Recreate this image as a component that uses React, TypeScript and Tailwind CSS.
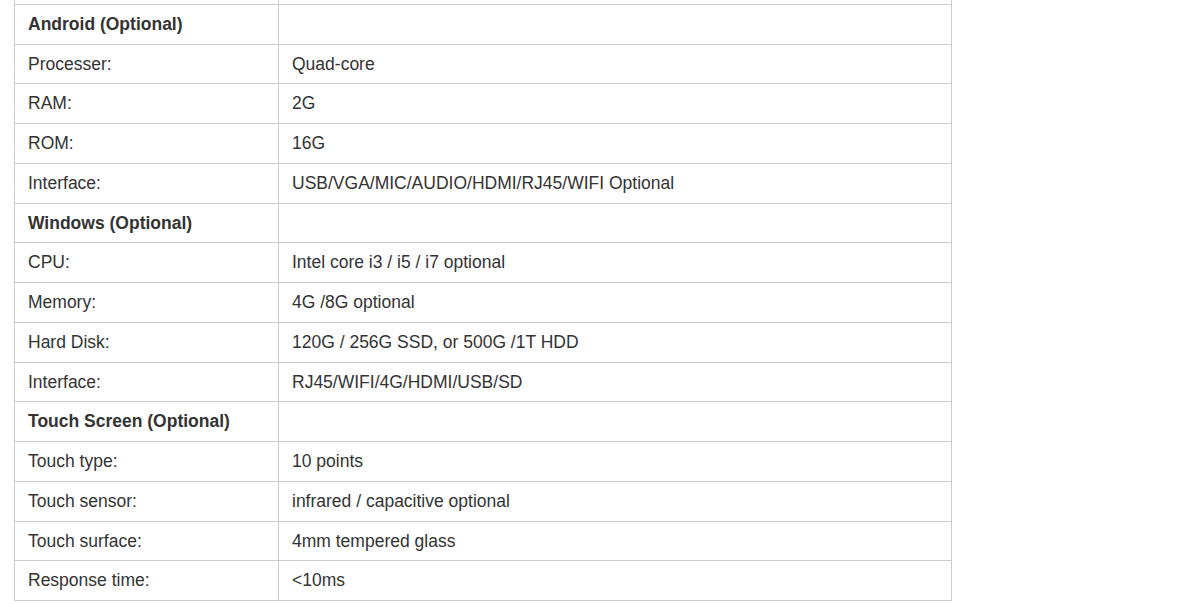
import React from "react";

type Row = { k: string; v: string; head?: boolean };

const rows: Row[] = [
  { k: "", v: "" },
  { k: "Android (Optional)", v: "", head: true },
  { k: "Processer:", v: "Quad-core" },
  { k: "RAM:", v: "2G" },
  { k: "ROM:", v: "16G" },
  { k: "Interface:", v: "USB/VGA/MIC/AUDIO/HDMI/RJ45/WIFI Optional" },
  { k: "Windows (Optional)", v: "", head: true },
  { k: "CPU:", v: "Intel core i3 / i5 / i7 optional" },
  { k: "Memory:", v: "4G /8G optional" },
  { k: "Hard Disk:", v: "120G / 256G SSD, or 500G /1T HDD" },
  { k: "Interface:", v: "RJ45/WIFI/4G/HDMI/USB/SD" },
  { k: "Touch Screen (Optional)", v: "", head: true },
  { k: "Touch type:", v: "10 points" },
  { k: "Touch sensor:", v: "infrared / capacitive optional" },
  { k: "Touch surface:", v: "4mm tempered glass" },
  { k: "Response time:", v: "<10ms" },
];

export default function App() {
  return (
    <div className="w-[1182px] h-[604px] overflow-hidden bg-white">
      <div className="pl-[14px] mt-[-35.73px]">
        <table
          className="w-[938px] border-collapse text-[#333] text-[17.5px] leading-[22.73px]"
          style={{ fontFamily: '"Liberation Sans", Arial, sans-serif' }}
        >
          <tbody>
            {rows.map((r, i) => (
              <tr key={i}>
                <td
                  className={`w-[264px] border border-[#cccccc] px-[13px] py-[8px] align-middle h-[39.73px] ${
                    r.head ? "font-bold" : ""
                  }`}
                >
                  {r.k}
                </td>
                <td className="border border-[#cccccc] px-[13px] py-[8px] align-middle">
                  {r.v}
                </td>
              </tr>
            ))}
          </tbody>
        </table>
      </div>
    </div>
  );
}
